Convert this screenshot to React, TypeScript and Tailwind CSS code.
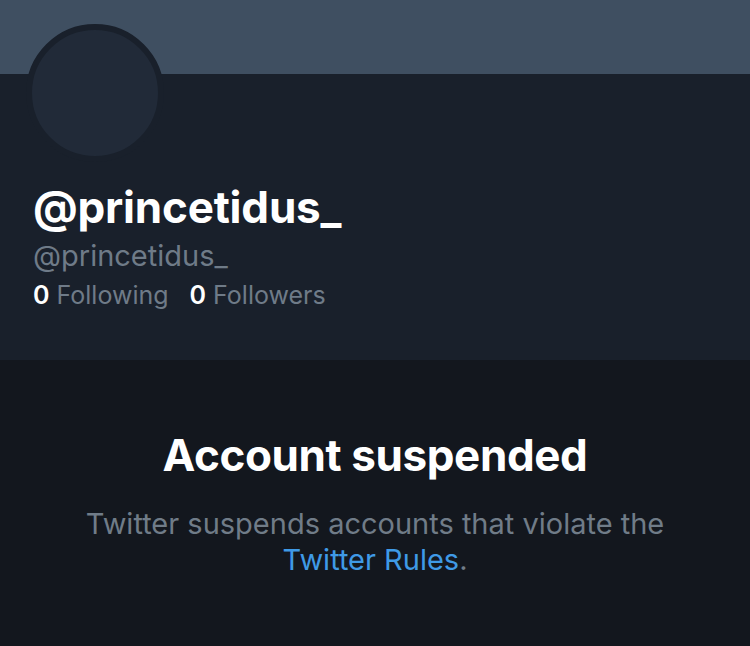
import React from "react";

const App = () => {
  return (
    <div className="w-[750px] h-[646px] flex flex-col overflow-hidden font-['Inter',sans-serif]">
      <div className="h-[74px] bg-[#3f4f61]" />

      <section className="h-[286px] bg-[#19202b] px-[33px]">
        <div className="-mt-[50px] ml-[-7px] w-[138px] h-[138px] rounded-full border-[6px] border-[#19202b] bg-[#212a38]" />
        <h1 className="mt-[20px] text-[44px] leading-[50px] font-bold text-white tracking-[-0.2px]">
          @princetidus_
        </h1>
        <p className="mt-[6px] text-[29px] leading-[36px] text-[#6f7b88]">@princetidus_</p>
        <div className="mt-[5px] flex gap-[21px] text-[25px] leading-[32px] text-[#6f7b88]">
          <span>
            <span className="font-semibold text-white">0</span> Following
          </span>
          <span>
            <span className="font-semibold text-white">0</span> Followers
          </span>
        </div>
      </section>

      <section className="flex-1 bg-[#13171e] flex flex-col items-center pt-[70px] text-center">
        <h2 className="text-[44px] leading-[50px] font-bold text-white tracking-[-0.4px]">Account suspended</h2>
        <p className="mt-[26px] w-[640px] text-[29px] leading-[36px] text-[#707c88]">
          Twitter suspends accounts that violate the{" "}
          <span className="text-[#3f9ae6]">Twitter Rules</span>.
        </p>
      </section>
    </div>
  );
};

export default App;
